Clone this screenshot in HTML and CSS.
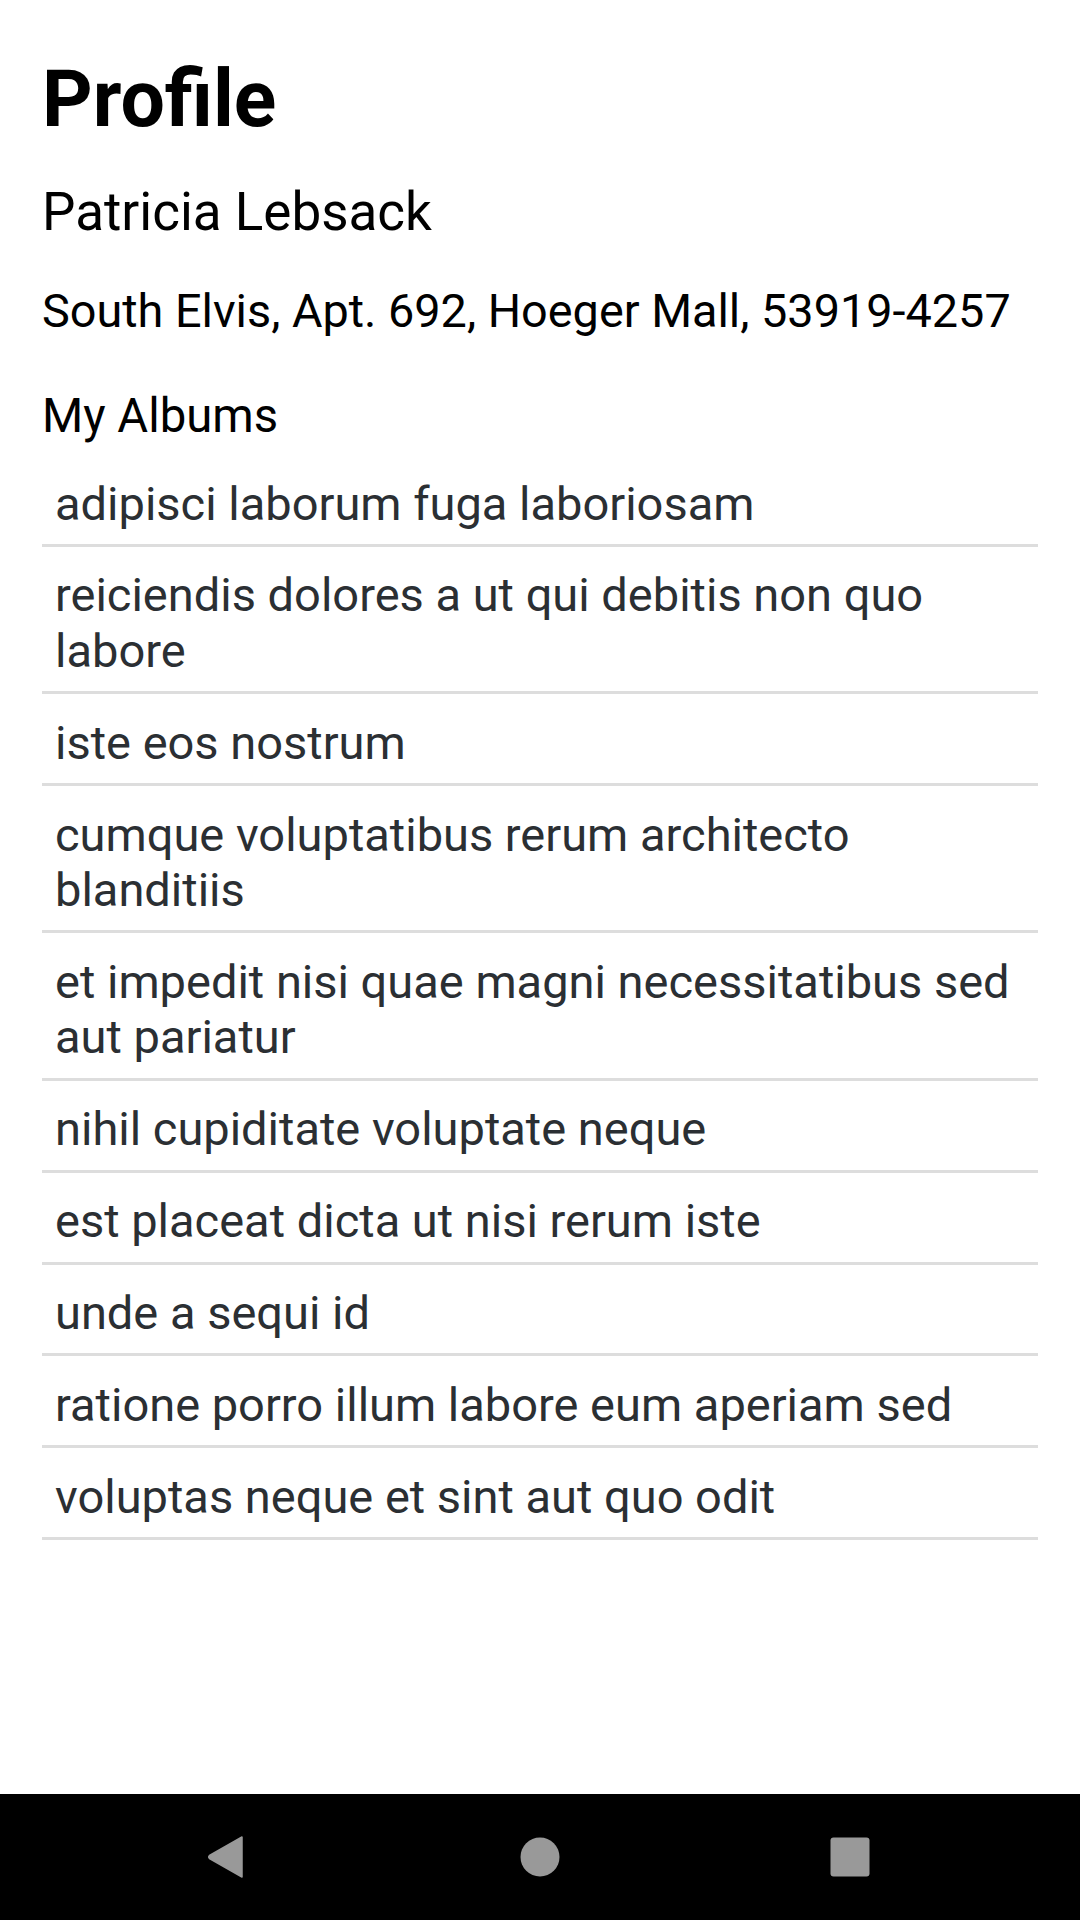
FILE: index.html
```html
<!DOCTYPE html>
<html>
<head>
<meta charset="utf-8">
<link rel="stylesheet" href="styles.css">
</head>
<body>
<div class="screen">
  <main class="content">
    <h1 class="title">Profile</h1>
    <p class="name">Patricia Lebsack</p>
    <p class="address">South Elvis, Apt. 692, Hoeger Mall, 53919-4257</p>
    <h2 class="section">My Albums</h2>
    <ul class="albums">
      <li class="album">adipisci laborum fuga laboriosam</li>
      <li class="album">reiciendis dolores a ut qui debitis non quo labore</li>
      <li class="album">iste eos nostrum</li>
      <li class="album">cumque voluptatibus rerum architecto blanditiis</li>
      <li class="album">et impedit nisi quae magni necessitatibus sed aut pariatur</li>
      <li class="album">nihil cupiditate voluptate neque</li>
      <li class="album">est placeat dicta ut nisi rerum iste</li>
      <li class="album">unde a sequi id</li>
      <li class="album">ratione porro illum labore eum aperiam sed</li>
      <li class="album">voluptas neque et sint aut quo odit</li>
    </ul>
  </main>
  <nav class="navbar">
    <svg class="nav-icon nav-back" width="36" height="42" viewBox="0 0 36 42"><path d="M35 1 L35 41 L2.5 22.5 Q1 21 2.5 19.5 Z" fill="#999" stroke="#999" stroke-width="1.5" stroke-linejoin="round"/></svg>
    <svg class="nav-icon nav-home" width="40" height="40" viewBox="0 0 40 40"><circle cx="20" cy="20" r="19.5" fill="#999"/></svg>
    <svg class="nav-icon nav-recent" width="40" height="40" viewBox="0 0 40 40"><rect x="0.5" y="0.5" width="39" height="39" rx="3" fill="#999"/></svg>
  </nav>
</div>
</body>
</html>
```
FILE: styles.css
```css
* { box-sizing: border-box; }
html, body { margin: 0; padding: 0; }
body {
  width: 1080px;
  height: 1920px;
  background: #fff;
  font-family: Roboto, "Noto Sans", sans-serif;
  overflow: hidden;
}
.screen {
  display: flex;
  flex-direction: column;
  height: 1920px;
}
.content {
  flex: 1;
  padding: 53px 42px 0 42px;
}
.title {
  margin: 0;
  font-size: 78.75px;
  font-weight: 700;
  line-height: normal;
  color: #000;
}
.name {
  margin: 36px 0 0 0;
  font-size: 53px;
  line-height: normal;
  color: #000;
}
.address {
  margin: 41px 0 0 0;
  font-size: 46.8px;
  line-height: normal;
  color: #000;
}
.section {
  margin: 50px 0 0 0;
  font-size: 47.25px;
  font-weight: 400;
  line-height: normal;
  color: #000;
}
.albums {
  list-style: none;
  margin: 11px 0 0 0;
  padding: 0;
}
.album {
  padding: 20.5px 13px 13px 13px;
  font-size: 47px;
  line-height: 55.4px;
  color: #2b2f33;
  border-bottom: 3px solid #dddddd;
}
.navbar {
  height: 126px;
  background: #000;
  display: flex;
  align-items: center;
  justify-content: center;
  gap: 270px;
  padding-right: 3px;
}
.nav-icon { display: block; }
.nav-back { margin-right: 7px; }
```
